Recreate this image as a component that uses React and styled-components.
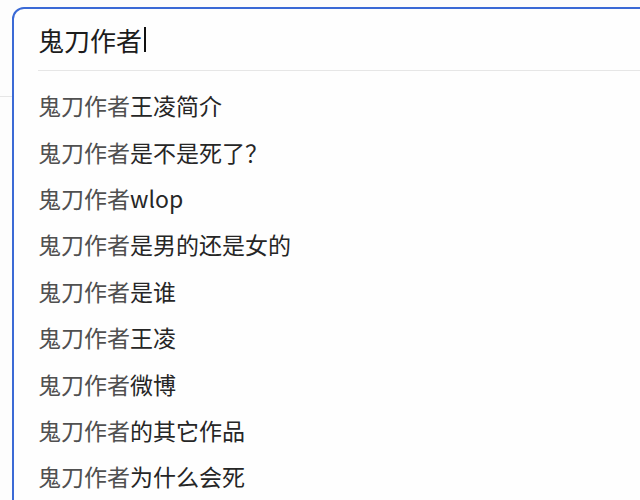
import React from 'react';
import styled, { createGlobalStyle } from 'styled-components';

const GlobalStyle = createGlobalStyle`
    html, body {
        margin: 0;
        padding: 0;
        background: #fdfdfd;
        overflow: hidden;
    }
    body {
        font-family: "Noto Sans CJK SC", "Noto Sans", sans-serif;
    }
`;

const Page = styled.div`
    position: relative;
    width: 640px;
    height: 500px;
    overflow: hidden;
`;

const HeaderBar = styled.div`
    height: 96px;
    border-bottom: 1px solid #e6e6e6;
    background: #fdfdfd;
`;

const SearchBox = styled.div`
    position: absolute;
    top: 7px;
    left: 12px;
    right: -30px;
    bottom: -30px;
    border: 2px solid #3b6ad6;
    border-radius: 12px;
    background: #fefefe;
    display: flex;
    flex-direction: column;
`;

const InputRow = styled.div`
    height: 61px;
    display: flex;
    align-items: center;
    padding-left: 24px;
    font-size: 26px;
    color: #1c1c1c;
`;

const Caret = styled.span`
    display: inline-block;
    width: 2px;
    height: 25px;
    margin-left: 2px;
    background: #111;
`;

const Divider = styled.div`
    height: 1px;
    margin-left: 24px;
    background: #e6e6e6;
`;

const List = styled.ul`
    list-style: none;
    margin: 0;
    padding: 11px 0 0 24px;
`;

const Item = styled.li`
    height: 46.4px;
    display: flex;
    align-items: center;
    font-size: 23px;
    color: #262626;
    white-space: nowrap;
`;

const Prefix = styled.span`
    color: #505050;
`;

const query = '鬼刀作者';

const suggestions = [
    '王凌简介',
    '是不是死了？',
    'wlop',
    '是男的还是女的',
    '是谁',
    '王凌',
    '微博',
    '的其它作品',
    '为什么会死',
];

function App() {
    return (
        <Page>
            <GlobalStyle />
            <HeaderBar />
            <SearchBox>
                <InputRow>
                    {query}
                    <Caret />
                </InputRow>
                <Divider />
                <List>
                    {suggestions.map((s) => (
                        <Item key={s}>
                            <Prefix>{query}</Prefix>
                            {s}
                        </Item>
                    ))}
                </List>
            </SearchBox>
        </Page>
    );
}

export default App;
